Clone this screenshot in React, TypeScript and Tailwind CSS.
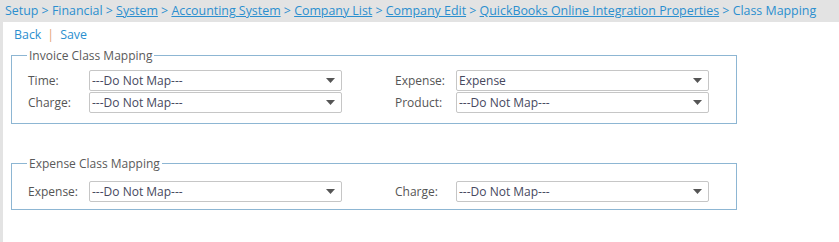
const crumbs: { text: string; link: boolean }[] = [
  { text: 'Setup', link: false },
  { text: 'Financial', link: false },
  { text: 'System', link: true },
  { text: 'Accounting System', link: true },
  { text: 'Company List', link: true },
  { text: 'Company Edit', link: true },
  { text: 'QuickBooks Online Integration Properties', link: true },
  { text: 'Class Mapping', link: false },
]

function FakeSelect({ value }: { value: string }) {
  return (
    <div className="flex h-[21px] w-[253px] items-center justify-between rounded-[2px] border border-[#c6c6c6] bg-white pl-[2px] pr-[6px] text-[12px] text-[#46485e]">
      <span className="leading-none">{value}</span>
      <svg width="9" height="5" viewBox="0 0 9 5">
        <path d="M0 0h9L4.5 5z" fill="#555" />
      </svg>
    </div>
  )
}

function Field({ label, value }: { label: string; value: string }) {
  return (
    <div className="flex items-center">
      <span className="w-[61px] text-[12px] text-[#555]">{label}</span>
      <FakeSelect value={value} />
    </div>
  )
}

function Group({ title, rows, top, bottom }: { title: string; rows: [string, string][][]; top: string; bottom: string }) {
  return (
    <fieldset className={`w-[726px] border border-[#8db6d3] ${bottom}`}>
      <legend className="ml-[15px] px-[2px] text-[12px] leading-[15px] text-[#5a5a5a]">{title}</legend>
      <div className={`${top} flex flex-col gap-[1px] pl-[16px]`}>
        {rows.map((r, i) => (
          <div key={i} className="flex gap-[53px]">
            {r.map(([l, v]) => <Field key={l} label={l} value={v} />)}
          </div>
        ))}
      </div>
    </fieldset>
  )
}

export default function App() {
  return (
    <div className="h-[242px] w-[839px] bg-[#e3e3e3] font-['Open_Sans',sans-serif]">
      <div className="flex h-[22px] items-center pl-[5px] text-[12.4px] text-[#2b8fcf]">
        {crumbs.map((c, i) => (
          <span key={c.text} className="whitespace-pre">
            {i > 0 && ' > '}
            {c.link ? <a className="underline">{c.text}</a> : c.text}
          </span>
        ))}
      </div>
      <div className="ml-[3px] h-[220px] bg-white pl-[8px]">
        <div className="flex h-[26px] items-center pl-[3px] text-[12.4px] text-[#2b8fcf]">
          <span>Back</span>
          <span className="mx-[6px] text-[#e4a373]">|</span>
          <span>Save</span>
        </div>
        <Group
          top="mt-[7px]"
          bottom="pb-[10px]"
          title="Invoice Class Mapping"
          rows={[
            [['Time:', '---Do Not Map---'], ['Expense:', 'Expense']],
            [['Charge:', '---Do Not Map---'], ['Product:', '---Do Not Map---']],
          ]}
        />
        <div className="mt-[32px]">
          <Group
            top="mt-[10px]"
            bottom="pb-[7px]"
            title="Expense Class Mapping"
            rows={[[['Expense:', '---Do Not Map---'], ['Charge:', '---Do Not Map---']]]}
          />
        </div>
      </div>
    </div>
  )
}
